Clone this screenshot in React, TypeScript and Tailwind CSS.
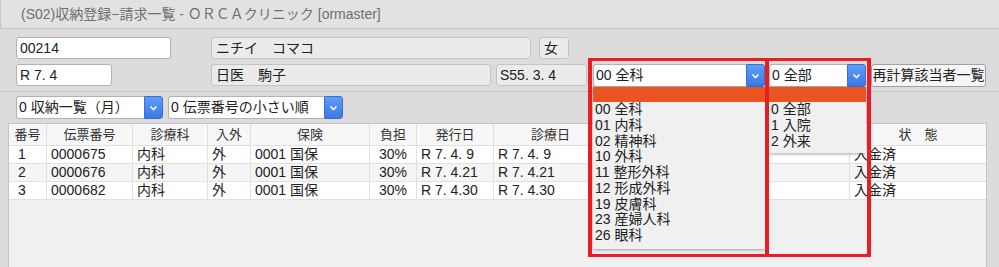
import React from "react";

function Chevron() {
  return (
    <svg width="9" height="6" viewBox="0 0 9 6">
      <path d="M1.5 1.5l3 3 3-3" fill="none" stroke="white" strokeWidth="1.6" />
    </svg>
  );
}

function Field({ className, text, ro }: { className: string; text: string; ro?: boolean }) {
  return (
    <div
      className={
        "h-[22px] shrink-0 flex items-center rounded-[3px] border px-[3px] text-[14px] text-[#222] whitespace-nowrap " +
        (ro ? "bg-[#ebebeb] border-[#c4c4c4] " : "bg-white border-[#b2b2b2] ") +
        className
      }
    >
      {text}
    </div>
  );
}

function Select({
  className,
  text,
  children,
}: {
  className: string;
  text: string;
  children?: React.ReactNode;
}) {
  return (
    <div className={"relative h-[23px] shrink-0 flex " + className}>
      <div className="flex-1 flex items-center rounded-l-[3px] border border-r-0 border-[#b2b2b2] bg-white pl-[2px] text-[14px] text-[#222] whitespace-nowrap overflow-hidden">
        {text}
      </div>
      <div className="w-[19px] flex items-center justify-center rounded-r-[3px] bg-gradient-to-b from-[#5f9df7] to-[#3a78e6] border border-[#3a6fd0]">
        <Chevron />
      </div>
      {children}
    </div>
  );
}

function DropList({ items, pb }: { items: string[]; pb: string }) {
  return (
    <div
      className={
        "absolute left-0 top-[23px] w-full z-10 bg-[#f0f0f0] shadow-[0_1px_3px_rgba(0,0,0,0.35)] " + pb
      }
    >
      <div className="h-[15px] bg-[#e95420]" />
      {items.map((t) => (
        <div key={t} className="h-[15.75px] leading-[15.75px] pl-[2px] text-[14px] text-[#222] whitespace-nowrap">
          {t}
        </div>
      ))}
    </div>
  );
}

const cols = ["番号", "伝票番号", "診療科", "入外", "保険", "負担", "発行日", "診療日", "", "", "状　態"];

const rows = [
  ["1", "0000675", "内科", "外", "0001 国保", "30%", "R 7. 4. 9", "R 7. 4. 9", "", "", "入金済"],
  ["2", "0000676", "内科", "外", "0001 国保", "30%", "R 7. 4.21", "R 7. 4.21", "", "", "入金済"],
  ["3", "0000682", "内科", "外", "0001 国保", "30%", "R 7. 4.30", "R 7. 4.30", "", "", "入金済"],
];

const grid =
  "grid grid-cols-[38px_86px_75px_43px_119px_47px_77px_114px_121px_121px_136px]";

export default function App() {
  return (
    <div className="relative w-[999px] h-[267px] overflow-hidden flex flex-col bg-[#dcdcdc] font-['Liberation_Sans','Noto_Sans_CJK_JP',sans-serif]">
      {/* title */}
      <div className="h-[29px] shrink-0 flex items-center pl-[20px] bg-[#e2e2e2] border-b border-l border-[#c6c6c6] text-[14px] text-[#707070] whitespace-nowrap">
        (S02)収納登録−請求一覧 - ＯＲＣＡクリニック [ormaster]
      </div>

      {/* form */}
      <div className="pt-[8px] pl-[16px] pb-[4px] flex flex-col gap-[5px]">
        <div className="flex">
          <Field className="w-[155px]" text="00214" />
          <Field className="w-[320px] ml-[40px] px-[4px]" text="ニチイ　コマコ" ro />
          <Field className="w-[30px] ml-[8px] px-[4px]" text="女" ro />
        </div>
        <div className="flex">
          <Field className="w-[96px]" text="R 7. 4" />
          <Field className="w-[280px] ml-[99px] px-[4px]" text="日医　駒子" ro />
          <Field className="w-[91px] ml-[5px]" text="S55. 3. 4" ro />
          <Select className="w-[172px] ml-[6px]" text="00 全科">
            <DropList
              pb="pb-[5px]"
              items={[
                "00 全科",
                "01 内科",
                "02 精神科",
                "10 外科",
                "11 整形外科",
                "12 形成外科",
                "19 皮膚科",
                "23 産婦人科",
                "26 眼科",
              ]}
            />
          </Select>
          <Select className="w-[97px] ml-[4px]" text="0 全部">
            <DropList pb="pb-[4px]" items={["0 全部", "1 入院", "2 外来"]} />
          </Select>
          <button className="ml-[5px] w-[115px] h-[23px] shrink-0 p-0 flex items-center justify-center rounded-[3px] border border-[#a0a0a0] bg-[#f6f6f6] text-[14px] text-[#222] whitespace-nowrap">
            再計算該当者一覧
          </button>
        </div>
      </div>

      <div className="border-t border-[#c2c2c2]" />

      <div className="pt-[4px] px-[16px] flex">
        <Select className="w-[147px]" text="0 収納一覧（月）" />
        <Select className="w-[175px] ml-[5px]" text="0 伝票番号の小さい順" />
      </div>

      {/* table */}
      <div className="mt-[4px] ml-[8px] w-[979px] flex-1 bg-[#f0f0f0] border border-b-0 border-[#c4c4c4]">
        <div className={grid + " h-[22px] bg-[#f7f7f7] border-b border-[#e0e0e0]"}>
          {cols.map((c, i) => (
            <div
              key={i}
              className={
                "flex items-center justify-center text-[13px] text-[#333] whitespace-nowrap " +
                (i < cols.length - 1 ? "border-r border-[#e0e0e0]" : "")
              }
            >
              {c}
            </div>
          ))}
        </div>
        {rows.map((r, ri) => (
          <div
            key={ri}
            className={
              grid +
              " h-[18px] border-b border-[#e0e0e0] " +
              (ri === 1 ? "bg-[#f5f5f5]" : "bg-white")
            }
          >
            {r.map((v, i) => (
              <div
                key={i}
                className={
                  "flex items-center text-[14px] text-[#222] whitespace-nowrap overflow-hidden " +
                  (i === 0 ? "pl-[9px] " : i === 5 ? "justify-center " : "pl-[4px] ") +
                  (i < r.length - 1 ? "border-r border-[#e0e0e0]" : "")
                }
              >
                {v}
              </div>
            ))}
          </div>
        ))}
      </div>

      {/* annotation boxes */}
      <div className="absolute left-[588px] top-[58px] w-[181px] h-[199px] border-x-4 border-y-[3px] border-[#ec1c24] z-20 pointer-events-none" />
      <div className="absolute left-[765px] top-[58px] w-[106px] h-[199px] border-x-4 border-y-[3px] border-[#ec1c24] z-20 pointer-events-none" />
    </div>
  );
}
